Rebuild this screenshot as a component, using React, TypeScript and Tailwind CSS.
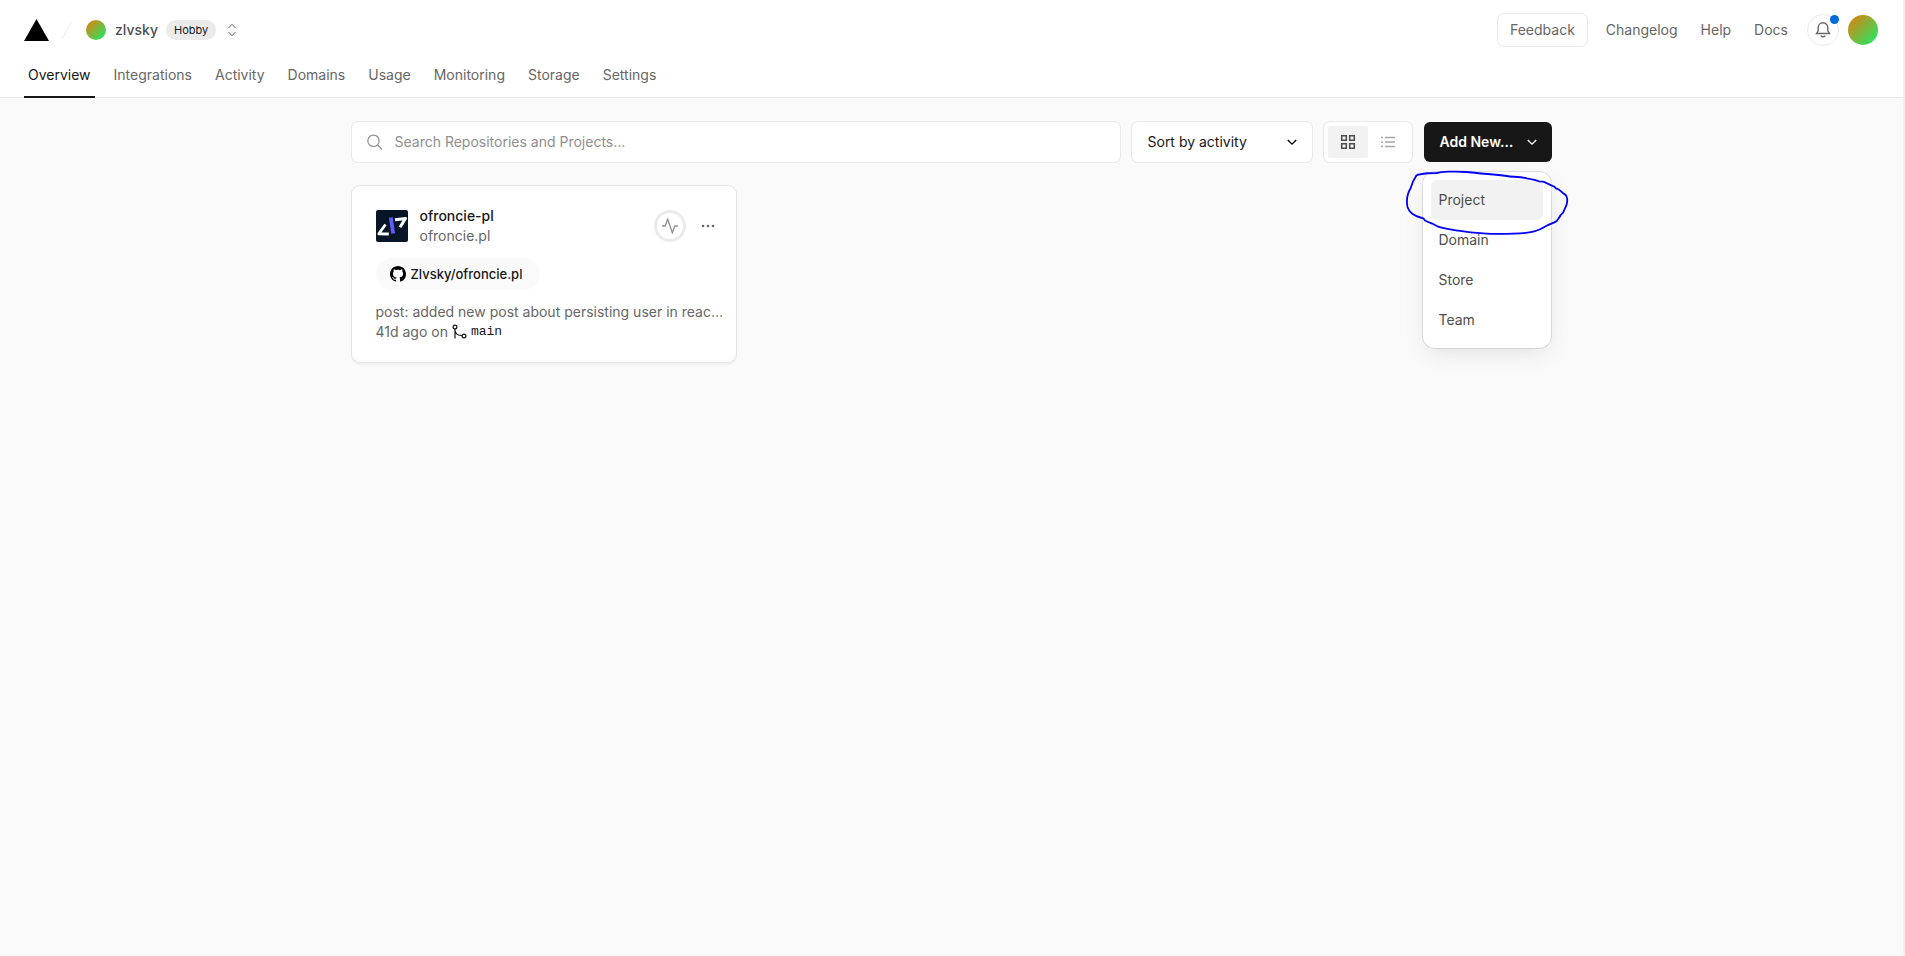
import { useState } from "react";

const tabs = ["Overview", "Integrations", "Activity", "Domains", "Usage", "Monitoring", "Storage", "Settings"];
const menuItems = ["Project", "Domain", "Store", "Team"];

const ChevronDown = ({ className }: { className?: string }) => (
  <svg viewBox="0 0 16 16" className={className} fill="none" stroke="currentColor" strokeWidth="1.3" aria-hidden="true">
    <path d="M3.8 6 8 10.2 12.2 6" />
  </svg>
);

function Header() {
  return (
    <header className="bg-white border-b border-[#eaeaea]">
      <div className="flex items-center justify-between h-15 pl-6 pr-[25px]">
        <div className="flex items-center">
          <a href="#" aria-label="Home">
            <svg viewBox="0 0 25 22" className="w-[25px] h-[22px]">
              <path d="M12.5 0 25 22H0z" />
            </svg>
          </a>
          <svg viewBox="0 0 22 22" className="w-[22px] h-[22px] ml-[7px]" stroke="#eaeaea" aria-hidden="true">
            <path d="M6.5 19 15.5 3" />
          </svg>
          <a href="#" className="flex items-center ml-2">
            <span className="w-5 h-5 rounded-full bg-[linear-gradient(135deg,#ee7a0c,#10f069)]" />
            <span className="ml-[9px] text-sm font-medium text-[#4d4d4d]">zlvsky</span>
            <span className="flex items-center ml-2 h-5 px-2 rounded-full bg-[#ebebeb] text-[11px] text-[#171717]">Hobby</span>
          </a>
          <button className="ml-2 text-[#666]" aria-label="Switch team">
            <svg viewBox="0 0 16 16" className="w-4 h-4" fill="none" stroke="currentColor">
              <path d="M4.5 6 8 2.3 11.5 6M4.5 10 8 13.7 11.5 10" />
            </svg>
          </button>
        </div>

        {/* Right Side */}
        <div className="flex items-center text-sm text-[#666]">
          <button className="h-8 px-3 rounded-md ring-1 ring-[#eaeaea]">Feedback</button>
          <div className="flex items-center gap-[23px] ml-[19px]">
            <a href="#">Changelog</a>
            <a href="#">Help</a>
            <a href="#">Docs</a>
          </div>
          <button className="relative flex items-center justify-center w-8 h-8 ml-[19px] rounded-full border border-[#eaeaea]" aria-label="Notifications">
            <svg viewBox="0 0 16 16" className="w-4 h-4" fill="none" stroke="currentColor" strokeWidth="1.4">
              <path d="M1.5 11.5H14.5L12.8 8.8V5.5C12.8 2.8 10.7.8 8 .8S3.2 2.8 3.2 5.5V8.8Z" />
              <path d="M5.8 13.6C6.8 15.2 9.2 15.2 10.2 13.6" />
            </svg>
            <span className="absolute top-0 -right-px w-[9px] h-[9px] rounded-full bg-[#006adc]" />
          </button>
          <button className="w-[30px] h-[30px] ml-[9px] rounded-full bg-[linear-gradient(135deg,#ee7a0c,#10f069)]" aria-label="Account" />
        </div>
      </div>

      <nav className="flex gap-[15px] px-6 text-sm">
        {tabs.map((tab, i) => (
          <a
            key={tab}
            href="#"
            className={`px-1 pt-[5px] h-[38px] -mb-px border-b-2 ${i === 0 ? "border-[#171717] text-[#171717]" : "border-transparent text-[#666]"}`}
          >
            {tab}
          </a>
        ))}
      </nav>
    </header>
  );
}

function Toolbar() {
  const [query, setQuery] = useState("");
  const [open, setOpen] = useState(true);

  return (
    <div className="flex gap-3 h-10 text-sm">
      <label className="flex flex-1 items-center h-10 px-[15px] rounded-md bg-white ring-1 ring-[#eaeaea]">
        <svg viewBox="0 0 16 16" className="w-4 h-4 text-[#8f8f8f]" fill="none" stroke="currentColor" strokeWidth="1.2" aria-hidden="true">
          <circle cx="6.5" cy="6.8" r="5.7" />
          <path d="m10.6 11 4.4 4.4" />
        </svg>
        <input
          value={query}
          onChange={(e) => setQuery(e.target.value)}
          aria-label="Search"
          placeholder="Search Repositories and Projects…"
          className="flex-1 ml-3 text-[#171717] placeholder:text-[#8f8f8f] focus:outline-none"
        />
      </label>

      <div className="relative w-[180px]">
        <select aria-label="Sort" className="w-full h-10 px-4 appearance-none rounded-md bg-white text-[#171717] ring-1 ring-[#eaeaea]">
          <option>Sort by activity</option>
          <option>Sort by name</option>
        </select>
        <ChevronDown className="absolute top-3 right-3 w-4 h-4 pointer-events-none" />
      </div>

      <div className="flex p-1 rounded-md bg-white ring-1 ring-[#eaeaea]">
        <button className="flex items-center justify-center w-10 h-8 rounded-xs bg-[#f2f2f2] text-[#4d4d4d]" aria-label="Grid view">
          <svg viewBox="0 0 16 16" className="w-4 h-4" fill="none" stroke="currentColor" strokeWidth="1.5">
            <path d="M1.7 1.7h4.6v4.6H1.7zM9.7 1.7h4.6v4.6H9.7zM1.7 9.7h4.6v4.6H1.7zM9.7 9.7h4.6v4.6H9.7z" />
          </svg>
        </button>
        <button className="flex items-center justify-center w-10 h-8 text-[#a8a8a8]" aria-label="List view">
          <svg viewBox="0 0 16 16" className="w-4 h-4" fill="none" stroke="currentColor" strokeWidth="1.6">
            <path d="M1 3.5h2M5 3.5h10M1 8h2M5 8h10M1 12.5h2M5 12.5h10" />
          </svg>
        </button>
      </div>

      <div className="relative">
        <button
          onClick={() => setOpen(!open)}
          className="flex items-center justify-between w-32 h-10 pl-4 pr-3 rounded-md bg-[#171717] font-semibold text-white"
        >
          Add New…
          <ChevronDown className="w-4 h-4" />
        </button>
        {open && (
          <div className="absolute top-[50px] right-px w-32 p-2 rounded-xl bg-white ring-1 ring-black/10 shadow-[0_8px_24px_-4px_rgba(0,0,0,0.1)]">
            {menuItems.map((item, i) => (
              <button
                key={item}
                className={`block w-full h-10 px-2 rounded-md text-left text-[#4d4d4d] ${i === 0 ? "bg-[#f2f2f2]" : ""}`}
              >
                {item}
              </button>
            ))}
            {/* Hand-drawn marker around the first item */}
            <svg viewBox="0 0 170 70" className="absolute -top-1 -left-[19px] w-[170px] h-[70px] pointer-events-none" fill="none" stroke="#0000f5" strokeWidth="1.8" strokeLinejoin="round" aria-hidden="true">
              <path d="M12.7 7C10 11 8 15 6.7 20C2.5 27 2.5 34 3.5 39C4.5 42 6 44 7.7 45.3C11 48 16 49.5 19.3 50.3L21 52.5C24 54 27 55 28.7 55.7L33.3 58.3C40 60.5 47 61.5 54.3 62.7C62 64 72 65 79.3 65.3C90 66.3 100 66 109.3 65.7C116 65.5 124 65 129.3 63.7C134 62.5 139 60 142.7 57.7C146 56 150 55 152.7 53C154 51 155.5 49.5 156.7 47L159.3 44.3C160.5 41 162 39 162.7 36.3C163.5 33 163.5 31 162.7 28.7C162 26.5 161 26 159.3 25.3C157 23 155 21 152 20.3L150 18.5C146 17 142.5 15 139.3 13.7L135 13.3C131 11.5 127 11 122.7 10.3C115 8.5 108 9 102.7 8C92 6.5 82 6 72.7 5C69 4.7 66 4.2 62.7 4C56 3.5 50 3.5 44.3 3.7C40 4 36 4.3 32.7 5C26 5 20 5.5 16 6.3L12.7 7" />
            </svg>
          </div>
        )}
      </div>
    </div>
  );
}

function ProjectCard() {
  return (
    <article className="h-44 pl-6 pr-4 py-5 rounded-lg bg-white ring-1 ring-[#e4e4e4] shadow-[0_2px_4px_rgba(0,0,0,0.06)] text-sm text-[#666]">
      <div className="flex items-center">
        <svg viewBox="0 0 32 32" className="w-8 h-8 rounded-xs" aria-hidden="true">
          <path fill="#071626" d="M0 0h32v32H0z" />
          <path d="M9.5 14.5 2.8 23.8 12.8 24" fill="none" stroke="#fff" strokeWidth="2.8" strokeLinejoin="round" />
          <path d="M19 9.8 29.5 8.5 24 17.3" fill="none" stroke="#fff" strokeWidth="3" strokeLinejoin="round" />
          <path d="m14.8 7.5 2.4 16" stroke="#635bff" strokeWidth="3.8" />
        </svg>
        <div className="ml-3">
          <h2 className="font-medium text-[#171717]">ofroncie-pl</h2>
          <a href="#" className="block">ofroncie.pl</a>
        </div>
        <button className="flex items-center justify-center w-8 h-8 ml-auto rounded-full border-3 border-[#ebebeb] text-[#8f8f8f]" aria-label="Analytics">
          <svg viewBox="0 0 16 16" className="w-4 h-4 shrink-0" fill="none" stroke="currentColor" strokeWidth="1.3">
            <path d="M0 8h3.2L5.7 1.2 10.3 14.8 12.7 8H16" />
          </svg>
        </button>
        <button className="flex items-center justify-center w-8 h-8 ml-1.5 -mr-1 text-[#666]" aria-label="More">
          <svg viewBox="0 0 16 16" className="w-4 h-4" fill="currentColor">
            <circle cx="3" cy="8" r="1.3" />
            <circle cx="8" cy="8" r="1.3" />
            <circle cx="13" cy="8" r="1.3" />
          </svg>
        </button>
      </div>

      <a href="#" className="inline-flex items-center gap-[5px] h-8 mt-3 pl-3.5 pr-[18px] rounded-full bg-[#fafafa] text-[13px] font-medium text-[#171717]">
        <svg viewBox="0 0 16 16" className="w-4 h-4" aria-hidden="true">
          <path d="M8 0C3.58 0 0 3.58 0 8c0 3.54 2.29 6.53 5.47 7.59.4.07.55-.17.55-.38 0-.19-.01-.82-.01-1.49-2.01.37-2.53-.49-2.69-.94-.09-.23-.48-.94-.82-1.13-.28-.15-.68-.52-.01-.53.63-.01 1.08.58 1.23.82.72 1.21 1.87.87 2.33.66.07-.52.28-.87.51-1.07-1.78-.2-3.64-.89-3.64-3.95 0-.87.31-1.59.82-2.15-.08-.2-.36-1.02.08-2.12 0 0 .67-.21 2.2.82.64-.18 1.32-.27 2-.27s1.36.09 2 .27c1.53-1.04 2.2-.82 2.2-.82.44 1.1.16 1.92.08 2.12.51.56.82 1.27.82 2.15 0 3.07-1.87 3.75-3.65 3.95.29.25.54.73.54 1.48 0 1.07-.01 1.93-.01 2.2 0 .21.15.46.55.38A8.01 8.01 0 0 0 16 8c0-4.42-3.58-8-8-8" />
        </svg>
        Zlvsky/ofroncie.pl
      </a>

      <p className="mt-3 whitespace-nowrap">post: added new post about persisting user in reac…</p>
      <div className="flex items-center">
        41d ago on
        <svg viewBox="0 0 16 16" className="w-4 h-4 ml-1" fill="none" stroke="#171717" strokeWidth="1.2" aria-hidden="true">
          <circle cx="3" cy="3" r="1.9" />
          <circle cx="12" cy="12" r="1.9" />
          <path d="M3 5v9.5M3 6.5C3.5 9.5 6 11.5 10 11.5" />
        </svg>
        <span className="ml-[3px] font-['Liberation_Mono',monospace] text-[13px] text-[#171717]">main</span>
      </div>
    </article>
  );
}

export default function App() {
  return (
    <div className="min-h-screen bg-[#fafafa] border-r-2 border-[#f0f0f0] font-['Inter',sans-serif]">
      <Header />
      <main className="max-w-[1248px] mx-auto px-6 pt-6">
        <Toolbar />
        <div className="grid grid-cols-3 gap-6 mt-6">
          <ProjectCard />
        </div>
      </main>
    </div>
  );
}
